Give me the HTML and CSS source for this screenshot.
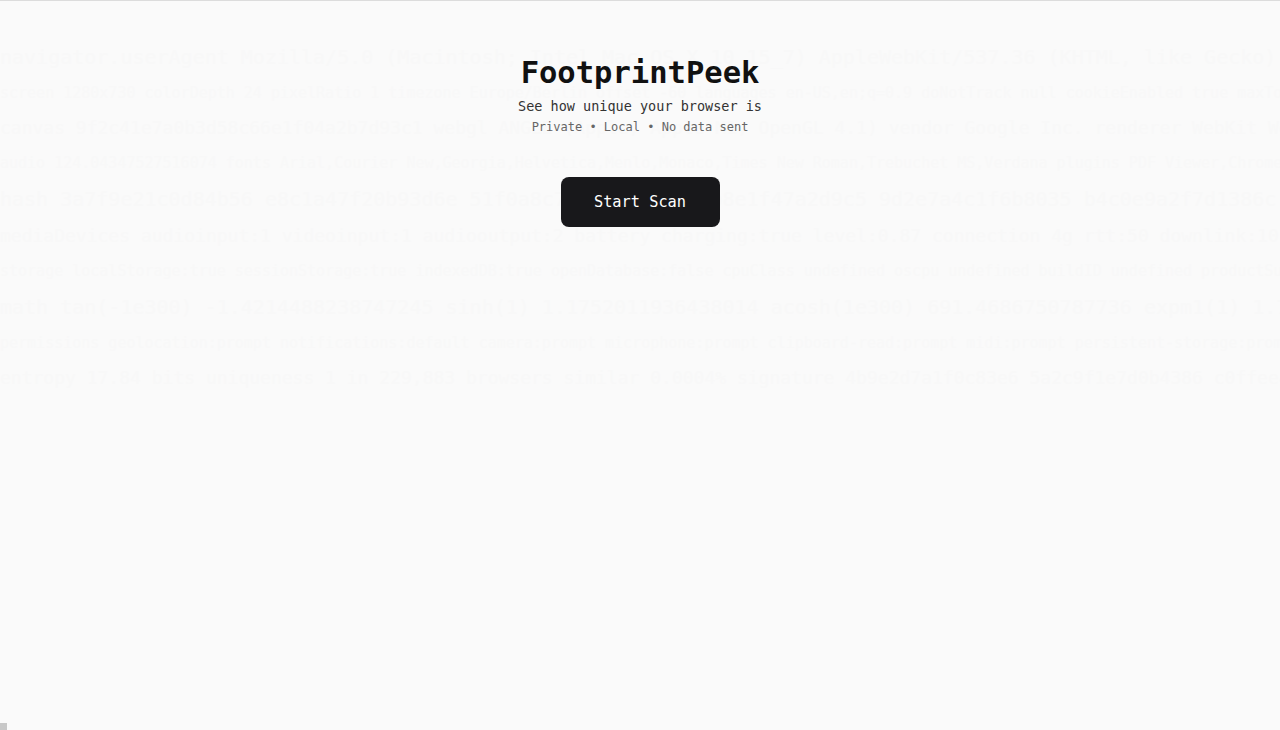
FILE: index.html
```html
<!DOCTYPE html>
<html lang="en">
<head>
    <meta charset="UTF-8">
    <meta name="viewport" content="width=device-width, initial-scale=1.0">
    <title>FootprintPeek</title>
    <link rel="stylesheet" href="styles.css">
</head>
<body>
    <!-- faint wall of fingerprint data behind the hero -->
    <div class="ghost" aria-hidden="true">
        <p class="g1">navigator.userAgent Mozilla/5.0 (Macintosh; Intel Mac OS X 10_15_7) AppleWebKit/537.36 (KHTML, like Gecko) Chrome/124.0.0.0 Safari/537.36 platform MacIntel hardwareConcurrency 8 deviceMemory 8</p>
        <p class="g2">screen 1280x730 colorDepth 24 pixelRatio 1 timezone Europe/Berlin offset -60 languages en-US,en;q=0.9 doNotTrack null cookieEnabled true maxTouchPoints 0 pdfViewerEnabled true webdriver false</p>
        <p class="g3">canvas 9f2c41e7a0b3d58c66e1f04a2b7d93c1 webgl ANGLE (Apple, Apple M1, OpenGL 4.1) vendor Google Inc. renderer WebKit WebGL</p>
        <p class="g2">audio 124.04347527516074 fonts Arial,Courier New,Georgia,Helvetica,Menlo,Monaco,Times New Roman,Trebuchet MS,Verdana plugins PDF Viewer,Chrome PDF Viewer,Chromium PDF Viewer</p>
        <p class="g1">hash 3a7f9e21c0d84b56 e8c1a47f20b93d6e 51f0a8c7b2e94d3a 0c6b8e1f47a2d9c5 9d2e7a4c1f6b8035 b4c0e9a2f7d1386c 7e5a1c9f0b2d4e68 c2f8a6b0d4e17953</p>
        <p class="g3">mediaDevices audioinput:1 videoinput:1 audiooutput:2 battery charging:true level:0.87 connection 4g rtt:50 downlink:10 saveData:false</p>
        <p class="g2">storage localStorage:true sessionStorage:true indexedDB:true openDatabase:false cpuClass undefined oscpu undefined buildID undefined productSub 20030107 vendorSub "" appVersion 5.0</p>
        <p class="g1">math tan(-1e300) -1.4214488238747245 sinh(1) 1.1752011936438014 acosh(1e300) 691.4686750787736 expm1(1) 1.718281828459045</p>
        <p class="g2">permissions geolocation:prompt notifications:default camera:prompt microphone:prompt clipboard-read:prompt midi:prompt persistent-storage:prompt background-sync:granted</p>
        <p class="g3">entropy 17.84 bits uniqueness 1 in 229,883 browsers similar 0.0004% signature 4b9e2d7a1f0c83e6 5a2c9f1e7d0b4386 c0ffee42d1a9b7e3</p>
    </div>

    <main class="hero">
        <h1 class="title">FootprintPeek</h1>
        <p class="tagline">See how unique your browser is</p>
        <p class="notes">Private • Local • No data sent</p>
        <button class="btn">Start Scan</button>
    </main>

    <div class="corner"></div>
</body>
</html>
```

FILE: styles.css
```css
body {
    margin: 0;
    min-height: 729px;
    background: #fafafa;
    border-top: 1px solid #dcdcdc;
    color: #111;
    font-family: "DejaVu Sans Mono", "Liberation Mono", monospace;
    overflow: hidden;
}
.ghost {
    position: absolute;
    top: 38px;
    left: 0;
    width: 100%;
    overflow: hidden;
    white-space: nowrap;
    color: #f8f8f8;
    pointer-events: none;
    z-index: 0;
}
.ghost p {
    margin: 0;
}
.g1 {
    font-size: 20px;
    line-height: 38px;
}
.g2 {
    font-size: 15px;
    line-height: 34px;
}
.g3 {
    font-size: 18px;
    line-height: 36px;
}
.hero {
    position: relative;
    z-index: 1;
    display: flex;
    flex-direction: column;
    align-items: center;
    padding-top: 52px;
    text-align: center;
}
.title {
    margin: 0;
    font-size: 30.5px;
    line-height: 40px;
    font-weight: bold;
    color: #111;
}
.tagline {
    margin: 3px 0 0;
    font-size: 13.5px;
    line-height: 20px;
    color: #333;
}
.notes {
    margin: 2px 0 0;
    font-size: 12px;
    line-height: 18px;
    color: #666;
}
.btn {
    margin-top: 41px;
    padding: 15px 0;
    width: 159px;
    background: #18181b;
    color: #fff;
    border: none;
    border-radius: 8px;
    font-family: inherit;
    font-size: 15.3px;
    line-height: 20px;
    cursor: pointer;
}
.btn:hover {
    background: #27272a;
}
.corner {
    position: fixed;
    left: 0;
    bottom: 0;
    width: 7px;
    height: 7px;
    background: #c8c8c8;
}
```
